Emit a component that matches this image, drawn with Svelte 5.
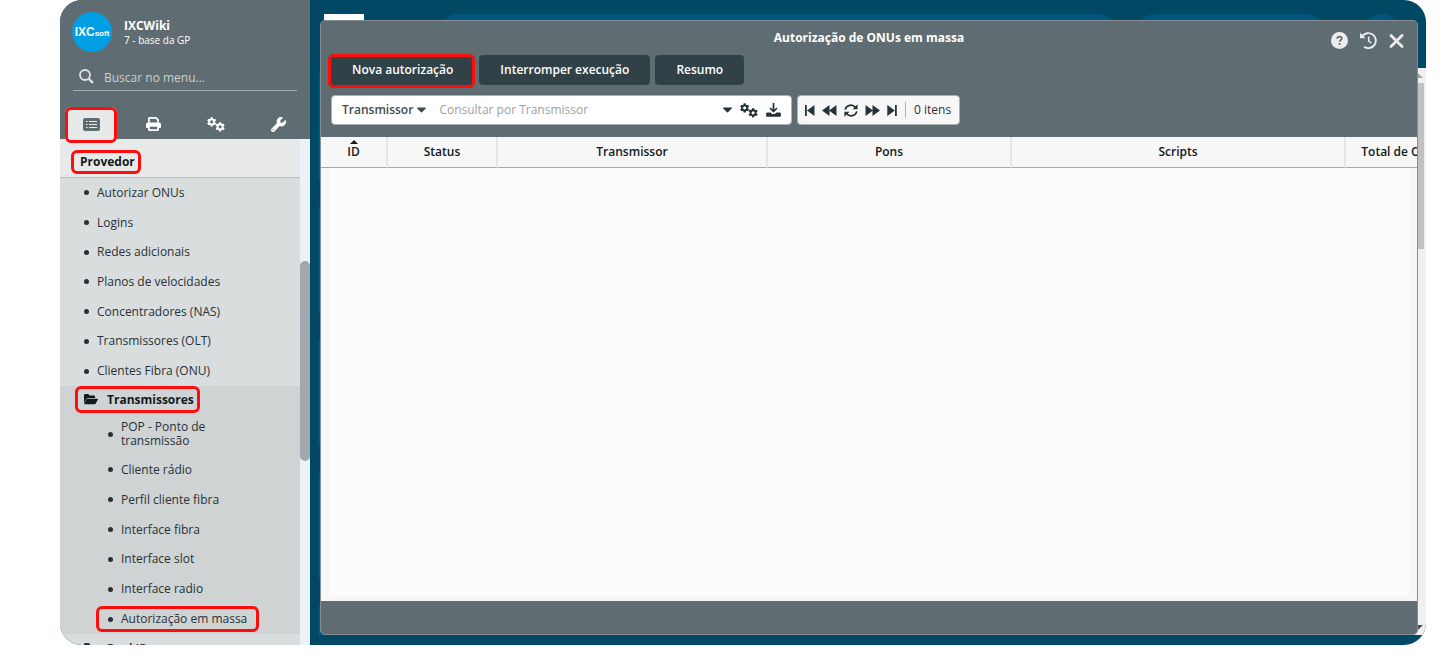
<script>
  const tabs = ['list', 'print', 'gears', 'wrench'];
  const links = [
    'Autorizar ONUs',
    'Logins',
    'Redes adicionais',
    'Planos de velocidades',
    'Concentradores (NAS)',
    'Transmissores (OLT)',
    'Clientes Fibra (ONU)'
  ];
  const sublinks = [
    'POP - Ponto de transmissão',
    'Cliente rádio',
    'Perfil cliente fibra',
    'Interface fibra',
    'Interface slot',
    'Interface radio',
    'Autorização em massa'
  ];
  const columns = [
    { name: 'ID', width: 67, sorted: true },
    { name: 'Status', width: 110 },
    { name: 'Transmissor', width: 270 },
    { name: 'Pons', width: 244 },
    { name: 'Scripts', width: 334 },
    { name: 'Total de ONUs', width: 116 }
  ];
  const labels = {
    list: 'Menu',
    print: 'Relatórios',
    gears: 'Configurações',
    wrench: 'Ferramentas',
    help: 'Ajuda',
    history: 'Histórico',
    close: 'Fechar',
    caret: 'Opções',
    download: 'Exportar',
    first: 'Primeira página',
    prev: 'Página anterior',
    refresh: 'Atualizar',
    next: 'Próxima página',
    last: 'Última página'
  };

  let search = $state('');
  let query = $state('');
  let activeTab = $state('list');
</script>

{#snippet gear(cx, cy)}
  <g transform="translate({cx} {cy})">
    <circle r="3.1" fill="none" stroke="currentColor" stroke-width="2.4" />
    {#each [0, 60, 120, 180, 240, 300] as angle}
      <rect x="-1.4" y="-5.6" width="2.8" height="2.6" fill="currentColor" transform="rotate({angle})" />
    {/each}
  </g>
{/snippet}

{#snippet icon(name)}
  {#if name === 'list'}
    <svg width="17" height="13" viewBox="0 0 17 13">
      <rect width="17" height="13" rx="2" fill="currentColor" />
      <path d="M3 3.5h1.6M3 6.5h1.6M3 9.5h1.6M6 3.5h8M6 6.5h8M6 9.5h8" stroke="#e8eae9" stroke-width="1.2" />
    </svg>
  {:else if name === 'print'}
    <svg width="15" height="14" viewBox="0 0 15 14">
      <path d="M2 5.500V1.500C2 .7 2.700 0 3.500 0h6.800L13 2.600v2.900h-1.800V3.300L9.600 1.700H3.800v3.800z" fill="currentColor" />
      <path d="M2 5.500h11c1.100 0 2 .9 2 2v2.700c0 .5-.4.800-.8.800H13v1.500c0 .8-.7 1.500-1.500 1.500h-8C2.700 14 2 13.300 2 12.500V11H.8c-.4 0-.8-.3-.8-.8V7.500c0-1.100.9-2 2-2zM3.800 9.800v2.500h7.400V9.800z" fill="currentColor" fill-rule="evenodd" />
    </svg>
  {:else if name === 'gears'}
    <svg width="18" height="15" viewBox="0 0 18 15">
      <g transform="scale(.82)">{@render gear(5.700, 6)}</g>
      <g transform="scale(.82)">{@render gear(16, 12)}</g>
    </svg>
  {:else if name === 'wrench'}
    <svg width="15" height="15" viewBox="0 0 512 512" fill="currentColor">
      <path d="M352 320c88.400 0 160-71.600 160-160 0-15.300-2.200-30.100-6.200-44.200-3.100-10.800-16.400-13.200-24.300-5.300l-76.800 76.800c-3 3-7.100 4.700-11.300 4.700H336c-8.800 0-16-7.200-16-16v-57.400c0-4.200 1.700-8.300 4.700-11.300l76.800-76.800c7.900-7.900 5.400-21.200-5.300-24.300C382.100 2.200 367.300 0 352 0 263.600 0 192 71.600 192 160c0 19.100 3.400 37.500 9.500 54.500L19.900 396.100C7.200 408.800 0 426.100 0 444.100 0 481.600 30.400 512 67.900 512c18 0 35.300-7.200 48-19.900l181.600-181.600c17 6.200 35.400 9.500 54.500 9.500zM80 408a24 24 0 1 1 0 48 24 24 0 1 1 0-48z" />
    </svg>
  {:else if name === 'search'}
    <svg width="15" height="15" viewBox="0 0 15 15" fill="none" stroke="currentColor" stroke-width="1.8">
      <circle cx="6" cy="6" r="5" />
      <path d="M9.600 9.600l4.400 4.400" stroke-width="2.200" />
    </svg>
  {:else if name === 'folder'}
    <svg width="14" height="11" viewBox="0 0 14 11" fill="currentColor">
      <path d="M0 9V1.300C0 .6.500 0 1.200 0h3l1.400 1.500h4.200c.7 0 1.200.5 1.200 1.200V4H4.200c-.8 0-1.400.4-1.800 1z" />
      <path d="M3.300 4.800h10c.5 0 .8.500.5.900l-2.300 4c-.2.400-.6.600-1 .6H.600c-.4 0-.6-.3-.4-.7l2.200-4.200c.200-.4.500-.6.900-.6z" />
    </svg>
  {:else if name === 'folder-closed'}
    <svg width="13" height="12" viewBox="0 0 13 12" fill="currentColor">
      <path d="M1.500 0h3.300l1.600 2h5.100c.8 0 1.500.7 1.500 1.500v7c0 .8-.7 1.500-1.500 1.500h-10C.7 12 0 11.300 0 10.500v-9C0 .7.700 0 1.500 0z" />
    </svg>
  {:else if name === 'help'}
    <svg width="17" height="17" viewBox="0 0 17 17">
      <circle cx="8.500" cy="8.500" r="8.500" fill="currentColor" />
      <path d="M6.200 6.700c0-1.300 1-2.100 2.300-2.100s2.300.8 2.300 2c0 1.500-2.200 1.600-2.200 3.100" fill="none" stroke="#5f6c71" stroke-width="1.700" />
      <circle cx="8.600" cy="12" r="1.100" fill="#5f6c71" />
    </svg>
  {:else if name === 'history'}
    <svg width="17" height="17" viewBox="0 0 17 17" fill="none" stroke="currentColor" stroke-width="1.900">
      <path d="M2.200 4.300a7.500 7.500 0 1 1 1.900 10.500" />
      <path d="M8.700 4.600v4.300l2.500 2.400" stroke-width="1.500" />
      <path d="M0 .8v5.400h5.500z" fill="currentColor" stroke="none" />
    </svg>
  {:else if name === 'close'}
    <svg width="15" height="14" viewBox="0 0 15 14" fill="none" stroke="currentColor" stroke-width="2.800" stroke-linecap="round">
      <path d="M2 1.500l11 11M13 1.500l-11 11" />
    </svg>
  {:else if name === 'caret'}
    <svg width="9" height="6" viewBox="0 0 9 6" fill="currentColor"><path d="M.7.500h7.600c.6 0 .9.600.5 1L5 5.300c-.3.300-.7.300-1 0L.2 1.500c-.4-.4-.1-1 .5-1z" /></svg>
  {:else if name === 'download'}
    <svg width="15" height="14" viewBox="0 0 15 14">
      <path d="M7.500 0v8M4 5l3.500 3.500L11 5" fill="none" stroke="currentColor" stroke-width="1.700" />
      <path d="M1.500 9.500h3l1.700 1.400h2.600l1.700-1.400h3c.8 0 1.400.6 1.400 1.400v1.500c0 .8-.6 1.400-1.400 1.400h-12C.7 13.800.1 13.200.1 12.400v-1.500c0-.8.600-1.400 1.400-1.400z" fill="currentColor" />
    </svg>
  {:else if name === 'first'}
    <svg width="10" height="11" viewBox="0 0 10 11" fill="currentColor"><path d="M0 0h1.800v11H0zM9.500 0v11L2 5.500z" /></svg>
  {:else if name === 'last'}
    <svg width="10" height="11" viewBox="0 0 10 11" fill="currentColor"><path d="M8 0h1.800v11H8zM.3 0v11l7.500-5.500z" /></svg>
  {:else if name === 'prev'}
    <svg width="15" height="11" viewBox="0 0 15 11" fill="currentColor"><path d="M7.500 0v11L0 5.500zM14.500 0v11L7 5.500z" /></svg>
  {:else if name === 'next'}
    <svg width="15" height="11" viewBox="0 0 15 11" fill="currentColor"><path d="M.5 0v11L8 5.500zM7.500 0v11L15 5.500z" /></svg>
  {:else if name === 'refresh'}
    <svg width="14" height="13" viewBox="0 0 14 13" fill="none" stroke="currentColor" stroke-width="1.700">
      <path d="M1.200 5.600A5.700 5.400 0 0 1 11.400 3.400M12.800 7.400A5.700 5.400 0 0 1 2.600 9.600" />
      <path d="M13.600.3v5H8.600zM.4 12.700v-5h5z" fill="currentColor" stroke="none" />
    </svg>
  {/if}
{/snippet}

{#snippet iconButton(name)}
  <button aria-label={labels[name]}>{@render icon(name)}</button>
{/snippet}

<div class="app">
  <aside>
    <header class="brand">
      <div class="logo"><b>IXC</b><span>soft</span></div>
      <div>
        <strong>IXCWiki</strong>
        <small>7 - base da GP</small>
      </div>
    </header>
    <label class="search">
      {@render icon('search')}
      <input type="text" placeholder="Buscar no menu..." aria-label="Buscar no menu" bind:value={search} />
    </label>
    <div class="tabs">
      {#each tabs as tab}
        <button
          class:active={activeTab === tab}
          class:marked={tab === 'list'}
          aria-label={labels[tab]}
          onclick={() => (activeTab = tab)}
        >
          {@render icon(tab)}
        </button>
      {/each}
    </div>
    <div class="menu">
      <nav>
        <h2><span class="marked">Provedor</span></h2>
        <ul>
          {#each links as link}
            <li><a href="#menu">{link}</a></li>
          {/each}
        </ul>
        <div class="group">
          <h3><a class="marked" href="#menu">{@render icon('folder')} Transmissores</a></h3>
          <ul>
            {#each sublinks as link, i}
              <li><a class:marked={i === sublinks.length - 1} href="#menu">{link}</a></li>
            {/each}
          </ul>
        </div>
        <a class="pool" href="#menu">{@render icon('folder-closed')} Pool IP</a>
      </nav>
      <div class="menu-scroll"><div></div></div>
    </div>
  </aside>

  <main>
    <div class="backdrop">
      <div class="topbar">
        <div class="page-logo"></div>
        <div class="pill wide"><i></i></div>
        <div class="pill"></div>
        <div class="round"></div>
      </div>
      <div class="page">
        <div class="tiles">
          {#each Array(5) as _}
            <div></div>
          {/each}
        </div>
        <div class="page-scroll">
          <i class="up"></i>
          <div></div>
          <i class="down"></i>
        </div>
      </div>
    </div>

    <section class="window">
      <header>
        <h1>Autorização de ONUs em massa</h1>
        <div class="window-actions">
          {@render iconButton('help')}
          {@render iconButton('history')}
          {@render iconButton('close')}
        </div>
      </header>
      <div class="actions">
        <button class="marked">Nova autorização</button>
        <button>Interromper execução</button>
        <button>Resumo</button>
      </div>
      <div class="filters">
        <div class="query">
          <button class="field">Transmissor {@render icon('caret')}</button>
          <input type="text" placeholder="Consultar por Transmissor" aria-label="Consultar por Transmissor" bind:value={query} />
          {@render iconButton('caret')}
          {@render iconButton('gears')}
          {@render iconButton('download')}
        </div>
        <div class="pager">
          {@render iconButton('first')}
          {@render iconButton('prev')}
          {@render iconButton('refresh')}
          {@render iconButton('next')}
          {@render iconButton('last')}
          <span>0 itens</span>
        </div>
      </div>
      <div class="grid">
        <table>
          <colgroup>
            {#each columns as column}
              <col style:width="{column.width}px" />
            {/each}
          </colgroup>
          <thead>
            <tr>
              {#each columns as column}
                <th class:sorted={column.sorted}>{column.name}</th>
              {/each}
            </tr>
          </thead>
        </table>
        <div class="rows"></div>
      </div>
      <footer></footer>
    </section>
  </main>
</div>

<style>
  :global(body) {
    margin: 0;
    background: #fff;
  }

  * {
    box-sizing: border-box;
  }

  .app {
    display: flex;
    height: calc(100vh - 15px);
    margin: 0 21px 0 60px;
    border-radius: 22px;
    overflow: hidden;
    font: 12px/16px "Open Sans", "Noto Sans", sans-serif;
    color: #263238;
    background: #004864;
  }

  button,
  input {
    font: inherit;
    color: inherit;
    border: 0;
    padding: 0;
    background: none;
  }

  input {
    outline: 0;
    min-width: 0;
  }

  a {
    color: inherit;
    text-decoration: none;
  }

  svg {
    display: block;
    flex: none;
  }

  h1,
  h2,
  h3,
  ul {
    margin: 0;
    padding: 0;
    font-size: 12px;
    list-style: none;
  }

  .marked {
    outline: 3px solid #fd0d0d;
    outline-offset: -3px;
    border-radius: 6px;
  }

  aside {
    flex: none;
    display: flex;
    flex-direction: column;
    width: 250px;
    background: #5f6c71;
  }

  .brand {
    display: flex;
    align-items: center;
    gap: 12px;
    padding: 12px 12px 0;
    color: #fff;
  }

  .brand strong,
  .brand small {
    display: block;
    line-height: 15px;
  }

  .brand strong {
    padding-top: 2px;
  }

  .brand small {
    font-size: 10px;
  }

  .logo {
    display: flex;
    align-items: baseline;
    justify-content: center;
    width: 40px;
    height: 40px;
    border-radius: 50%;
    background: #009fe3;
    font: 700 8px/40px "Liberation Sans", sans-serif;
  }

  .logo b {
    font-size: 12px;
  }

  .search {
    display: flex;
    align-items: center;
    gap: 10px;
    height: 27px;
    margin: 12px 13px 0;
    padding: 0 6px 2px;
    border-bottom: 1px solid #a4adb2;
    color: #dfe2e3;
  }

  .search input {
    flex: 1;
    padding-top: 3px;
  }

  input::placeholder {
    color: #a0a0a0;
  }

  .search input::placeholder {
    color: #cdd1d3;
  }

  .tabs {
    display: grid;
    grid-template-columns: repeat(4, 1fr);
    height: 48px;
    padding-top: 16px;
  }

  .tabs button {
    display: flex;
    align-items: center;
    justify-content: center;
    padding-bottom: 2px;
    color: #fff;
  }

  .tabs .active {
    z-index: 1;
    height: 36px;
    width: 52px;
    margin-left: 5px;
    color: #5f6c71;
    background: #e8eae9;
  }

  .menu {
    flex: 1;
    display: flex;
    min-height: 0;
  }

  nav {
    flex: 1;
    overflow: hidden;
    background: #d9dddd;
  }

  nav h2 {
    padding: 11px 11px 3px;
    border-bottom: 1px solid #b9bfc2;
    color: #111a1d;
    background: #e8eae9;
  }

  nav h2 span {
    display: inline-block;
    padding: 4px 6px 4px 9px;
  }

  nav ul {
    display: grid;
    grid-auto-rows: 1fr;
    height: 208px;
  }

  nav li {
    display: flex;
    align-items: center;
    min-height: 0;
  }

  nav li a {
    display: flex;
    align-items: center;
    gap: 8px;
    padding: 6px 12px;
    margin-left: 12px;
    line-height: 14px;
  }

  nav li a::before {
    content: "";
    flex: none;
    width: 5px;
    height: 5px;
    border-radius: 50%;
    background: #263238;
  }

  .group {
    background: #cfd3d4;
  }

  .group h3 {
    display: flex;
    padding-left: 15px;
    color: #111a1d;
  }

  .group h3 a {
    display: flex;
    align-items: center;
    gap: 9px;
    height: 27px;
    padding: 0 6px 0 9px;
  }

  .group ul {
    grid-template-rows: 42px;
    height: 221px;
    padding-left: 24px;
  }

  .group li:first-child {
    padding-right: 60px;
  }

  .pool {
    display: flex;
    align-items: center;
    gap: 10px;
    padding: 7px 24px;
    font-weight: 600;
  }

  .menu-scroll {
    width: 10px;
    padding-top: 122px;
    background: #ebf3f7;
  }

  .menu-scroll div {
    height: 200px;
    border-radius: 5px;
    background: #a2a9ae;
  }

  main {
    flex: 1;
    display: grid;
    grid-template-rows: minmax(0, 1fr);
    min-width: 0;
  }

  .backdrop,
  .window {
    grid-area: 1 / 1;
    min-width: 0;
  }

  .backdrop {
    display: flex;
    flex-direction: column;
  }

  .topbar {
    flex: none;
    display: flex;
    height: 68px;
    padding: 14px 25px 0 14px;
  }

  .page-logo {
    width: 40px;
    height: 30px;
    margin-right: 74px;
    background: #fff;
  }

  .pill {
    flex: 190;
    margin-right: 38px;
    border-radius: 20px;
    background: #00567a;
  }

  .pill.wide {
    flex: 679;
    margin-right: 18px;
  }

  .pill i {
    display: block;
    width: 140px;
    height: 100%;
    border-right: 1px solid #006189;
  }

  .round {
    width: 38px;
    height: 38px;
    border-radius: 50%;
    background: #00567a;
  }

  .page {
    flex: 1;
    display: flex;
    justify-content: space-between;
    min-height: 0;
    margin-bottom: 10px;
  }

  .tiles {
    display: flex;
    flex-direction: column;
    gap: 20px;
    width: 240px;
    padding: 2px 0 0 8px;
    overflow: hidden;
  }

  .tiles div {
    flex: none;
    height: 113px;
    border-radius: 6px;
    background: #00567a;
  }

  .page-scroll {
    display: flex;
    flex-direction: column;
    width: 16px;
    background: #f0f0f0;
  }

  .page-scroll div {
    width: 14px;
    height: 166px;
    background: #c1c1c1;
  }

  .page-scroll i {
    width: 0;
    margin: 5px 3px;
    border: 5px solid transparent;
    border-top: 0;
    border-bottom-color: #a3a3a3;
  }

  .page-scroll .down {
    margin-top: auto;
    border-top: 5px solid #505050;
    border-bottom: 0;
  }

  .window {
    position: relative;
    display: flex;
    flex-direction: column;
    margin: 20px 8px 10px 10px;
    border: 1px solid #838e92;
    border-radius: 5px;
    overflow: hidden;
    background: #5f6c71;
  }

  .window header {
    position: relative;
    height: 33px;
    padding-top: 9px;
    text-align: center;
    color: #fff;
  }

  .window-actions {
    position: absolute;
    top: 11px;
    right: 13px;
    display: flex;
    align-items: center;
    gap: 12px;
    color: #ececec;
  }

  .actions {
    display: flex;
    gap: 5px;
    padding: 0 7px;
    font-weight: 600;
  }

  .actions button {
    height: 30px;
    margin-top: 1px;
    padding: 0 21px;
    border-radius: 4px;
    color: #fff;
    background: #314148;
  }

  .actions .marked {
    height: 34px;
    margin: 0 -1px 0 0;
    padding: 0 22px 2px 24px;
    border-radius: 6px;
  }

  .filters {
    display: flex;
    gap: 5px;
    padding: 7px 10px 12px;
  }

  .query,
  .pager {
    display: flex;
    align-items: center;
    height: 30px;
    border: 1px solid #a9b1b4;
    border-radius: 4px;
    background: #fff;
  }

  .query {
    width: 461px;
    gap: 8px;
    padding: 0 10px;
  }

  .query input {
    flex: 1;
    margin-left: 5px;
  }

  .field {
    display: flex;
    align-items: center;
    gap: 4px;
    font-weight: 600;
    color: #424b50;
  }

  .pager {
    gap: 7px;
    padding: 0 8px 0 7px;
    background: #f7f7f7;
  }

  .pager span {
    margin-left: 1px;
    padding-left: 8px;
    border-left: 1px solid #a9b1b4;
  }

  .grid {
    flex: 1;
    display: flex;
    flex-direction: column;
    overflow: hidden;
    background: #f7f7f7;
  }

  table {
    table-layout: fixed;
    width: 1141px;
    border-spacing: 0;
  }

  th {
    height: 31px;
    padding: 0;
    border-right: 2px solid #e6e6e6;
    border-bottom: 1px solid #9fa8ab;
    font-weight: 600;
    color: #111a1d;
  }

  .sorted::before {
    content: "";
    display: block;
    width: 0;
    margin: -4px auto 0;
    border: 4px solid transparent;
    border-top: 0;
    border-bottom-color: #111a1d;
  }

  .rows {
    flex: 1;
    margin: 0 8px 5px;
    background: #fcfcfc;
  }

  footer {
    height: 33px;
  }
</style>
